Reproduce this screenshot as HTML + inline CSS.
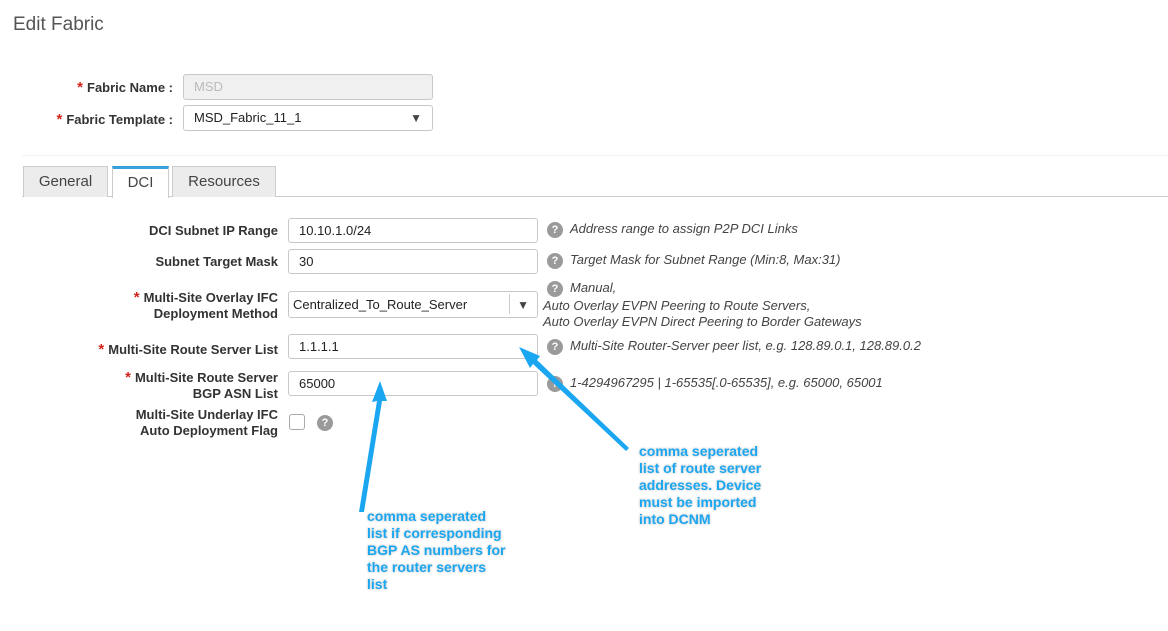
<!DOCTYPE html>
<html><head><style>
body{margin:0;width:1168px;height:631px;background:#fff;font-family:"Liberation Sans",Arial,sans-serif;position:relative;overflow:hidden}
.a{position:absolute}
.lbl{position:absolute;font-size:13px;font-weight:bold;color:#333;text-align:right;line-height:16px}
.st{color:#d0241b;font-size:15px;margin-right:4px}
.in{position:absolute;border:1px solid #c8c8c8;border-radius:3px;box-sizing:border-box;font-size:13px;color:#222;padding-left:10px;background:#fff}
.hint{position:absolute;font-size:13px;font-style:italic;color:#444;line-height:16px}
.q{display:inline-block;width:16px;height:16px;border-radius:50%;background:#9a9a9a;color:#fff;font-size:11px;font-weight:bold;font-style:normal;text-align:center;line-height:16px;margin-right:7px;vertical-align:middle}
.tab{position:absolute;top:166px;height:31px;box-sizing:border-box;font-size:15px;color:#444;text-align:center;line-height:30px;border:1px solid #ccc;border-bottom:none;background:#ececec}
.note{position:absolute;font-size:14px;font-weight:bold;color:#1aa6f0;line-height:17px;text-shadow:0 0 2px #fff,0 0 2px #999}
</style></head><body>
<div class="a" style="left:13px;top:14px;font-size:19px;color:#555">Edit Fabric</div>

<div class="lbl" style="right:995px;top:80px"><span class="st">*</span>Fabric Name :</div>
<div class="in" style="left:183px;top:74px;width:250px;height:26px;background:#f0f0f0;color:#bbb;line-height:24px">MSD</div>
<div class="lbl" style="right:995px;top:112px"><span class="st">*</span>Fabric Template :</div>
<div class="in" style="left:183px;top:105px;width:250px;height:26px;line-height:24px">MSD_Fabric_11_1<span class="a" style="right:10px;top:0;font-size:12px;color:#444">▼</span></div>

<div class="a" style="left:22px;top:155px;width:1146px;border-top:1px solid #f2f2f2"></div>
<div class="a" style="left:22px;top:196px;width:1146px;border-top:1px solid #ccc"></div>
<div class="tab" style="left:23px;width:85px">General</div>
<div class="tab" style="left:112px;width:57px;background:#fff;border-top:3px solid #3aa0dc;height:32px;line-height:28px">DCI</div>
<div class="tab" style="left:172px;width:104px">Resources</div>

<div class="lbl" style="right:890px;top:223px">DCI Subnet IP Range</div>
<div class="in" style="left:288px;top:218px;width:250px;height:25px;line-height:23px">10.10.1.0/24</div>
<div class="hint" style="left:547px;top:221px"><span class="q">?</span>Address range to assign P2P DCI Links</div>

<div class="lbl" style="right:890px;top:254px">Subnet Target Mask</div>
<div class="in" style="left:288px;top:249px;width:250px;height:25px;line-height:23px">30</div>
<div class="hint" style="left:547px;top:252px"><span class="q">?</span>Target Mask for Subnet Range (Min:8, Max:31)</div>

<div class="lbl" style="right:890px;top:290px"><span class="st">*</span>Multi-Site Overlay IFC<br>Deployment Method</div>
<div class="in" style="left:288px;top:291px;width:250px;height:27px;line-height:26px;padding-left:4px">Centralized_To_Route_Server<span class="a" style="left:220px;top:2px;height:20px;border-left:1px solid #ccc"></span><span class="a" style="right:8px;top:0;font-size:12px;color:#444">▼</span></div>
<div class="hint" style="left:547px;top:280px"><span class="q">?</span>Manual,</div>
<div class="hint" style="left:543px;top:298px">Auto Overlay EVPN Peering to Route Servers,<br>Auto Overlay EVPN Direct Peering to Border Gateways</div>

<div class="lbl" style="right:890px;top:342px"><span class="st">*</span>Multi-Site Route Server List</div>
<div class="in" style="left:288px;top:334px;width:250px;height:25px;line-height:23px">1.1.1.1</div>
<div class="hint" style="left:547px;top:338px"><span class="q">?</span>Multi-Site Router-Server peer list, e.g. 128.89.0.1, 128.89.0.2</div>

<div class="lbl" style="right:890px;top:370px"><span class="st">*</span>Multi-Site Route Server<br>BGP ASN List</div>
<div class="in" style="left:288px;top:371px;width:250px;height:25px;line-height:23px">65000</div>
<div class="hint" style="left:547px;top:375px"><span class="q">?</span>1-4294967295 | 1-65535[.0-65535], e.g. 65000, 65001</div>

<div class="lbl" style="right:890px;top:407px">Multi-Site Underlay IFC<br>Auto Deployment Flag</div>
<div class="a" style="left:289px;top:414px;width:14px;height:14px;border:1px solid #aaa;border-radius:3px"></div>
<div class="a" style="left:317px;top:414px"><span class="q">?</span></div>

<svg class="a" style="left:0;top:0" width="1168" height="631">
<polygon points="380,381 372,402 377,401 359,512 364,512 382,401 387,401" fill="#1aa6f0"/>
<polygon points="519,347 530,368 533,364 626,451 629,448 537,360 540,356" fill="#1aa6f0"/>
</svg>

<div class="note" style="left:367px;top:508px">comma seperated<br>list if corresponding<br>BGP AS numbers for<br>the router servers<br>list</div>
<div class="note" style="left:639px;top:443px">comma seperated<br>list of route server<br>addresses. Device<br>must be imported<br>into DCNM</div>
</body></html>
